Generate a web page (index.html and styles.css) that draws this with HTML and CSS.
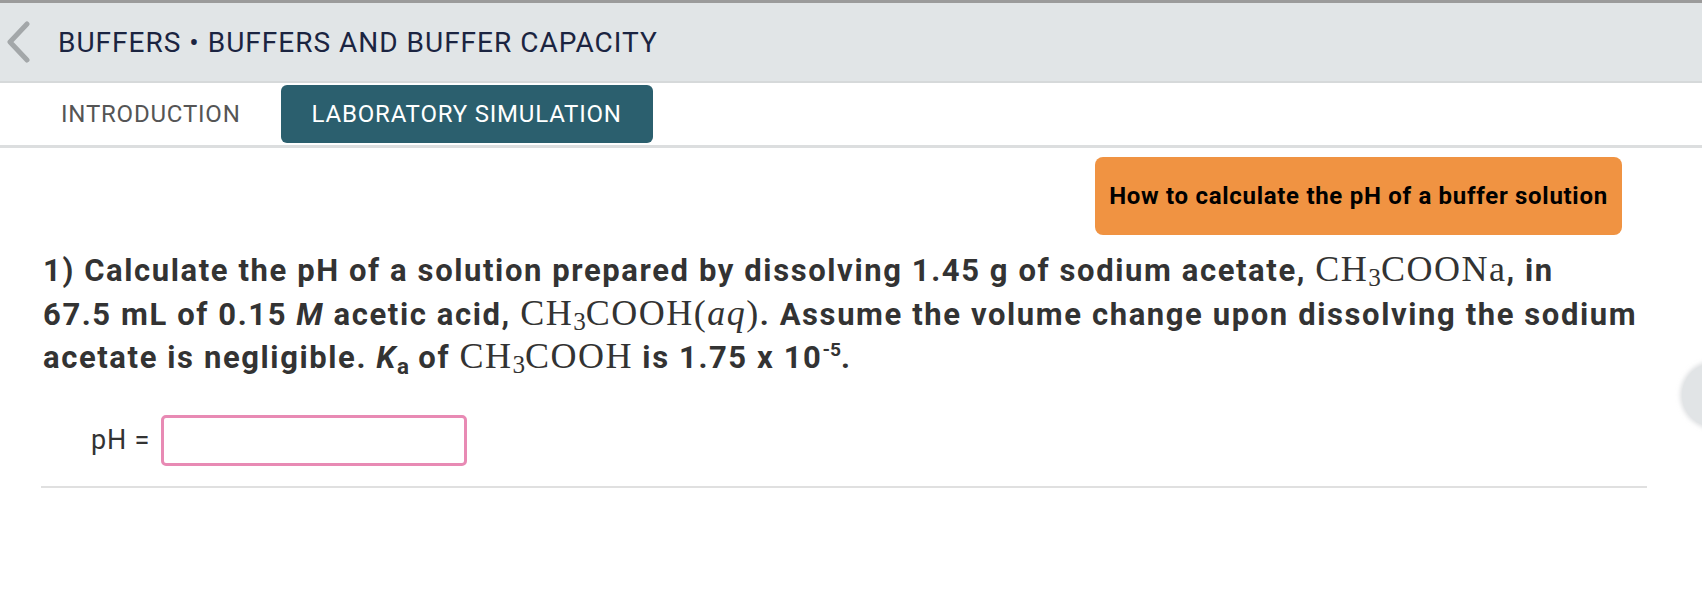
FILE: index.html
```html
<!DOCTYPE html>
<html lang="en">
<head>
<meta charset="utf-8">
<title>Buffers and Buffer Capacity</title>
<link rel="stylesheet" href="styles.css">
</head>
<body>
<div class="topline"></div>
<header class="header">
  <button class="back" aria-label="Back">
    <svg width="26" height="42" viewBox="0 0 26 42"><polyline points="22,3 5,21 22,39" fill="none" stroke="#a3a7a9" stroke-width="5" stroke-linecap="round" stroke-linejoin="round"/></svg>
  </button>
  <h1 class="title">BUFFERS • BUFFERS AND BUFFER CAPACITY</h1>
</header>
<nav class="tabs">
  <a class="tab">INTRODUCTION</a>
  <a class="tab active">LABORATORY SIMULATION</a>
</nav>
<main class="content">
  <div class="help-row">
    <button class="help">How to calculate the pH of a buffer solution</button>
  </div>
  <p class="question">1) Calculate the pH of a solution prepared by dissolving 1.45 g of sodium acetate, <span class="math">CH<sub>3</sub>COONa</span>, in 67.5&nbsp;mL of 0.15 <i>M</i> acetic acid, <span class="math">CH<sub>3</sub>COOH(<i>aq</i>)</span>. Assume the volume change upon dissolving the sodium acetate is negligible. <i>K</i><sub class="ka">a</sub> of <span class="math">CH<sub>3</sub>COOH</span> is 1.75 x 10<sup>-5</sup>.</p>
  <div class="answer">
    <label class="answer-label" for="ph">pH =</label>
    <input class="answer-input" id="ph" type="text">
  </div>
  <div class="sep"></div>
</main>
<div class="side-handle"></div>
</body>
</html>
```
FILE: styles.css
```css
html, body {
  margin: 0;
  padding: 0;
  background: #ffffff;
  font-family: Roboto, "Liberation Sans", sans-serif;
  overflow: hidden;
}
body {
  width: 1702px;
  height: 590px;
  position: relative;
}
.topline {
  height: 3px;
  background: #9b9b9b;
}
.header {
  height: 80px;
  box-sizing: border-box;
  background: #e1e5e7;
  border-bottom: 2px solid #d6d9da;
  display: flex;
  align-items: center;
  padding-left: 5px;
}
.back {
  border: 0;
  background: none;
  padding: 0;
  width: 26px;
  height: 42px;
  display: flex;
}
.title {
  margin: 0 0 0 27px;
  font-size: 28px;
  font-weight: 400;
  color: #1b2441;
  letter-spacing: 1px;
}
.tabs {
  height: 65px;
  box-sizing: border-box;
  border-bottom: 3px solid #dcdedf;
  display: flex;
  align-items: center;
  padding-left: 30px;
  gap: 9px;
}
.tab {
  height: 58px;
  padding: 0 31px;
  display: flex;
  align-items: center;
  font-size: 24px;
  letter-spacing: 0.8px;
  color: #555555;
  border-radius: 6px;
}
.tab.active {
  background: #2b5f6e;
  color: #ffffff;
}
.content {
  padding: 0 80px 0 41px;
}
.help-row {
  display: flex;
  justify-content: flex-end;
  padding-top: 9px;
}
.help {
  width: 527px;
  height: 78px;
  border: 0;
  border-radius: 8px;
  background: #f09342;
  color: #000000;
  font-family: Roboto, "Liberation Sans", sans-serif;
  font-weight: 700;
  font-size: 24px;
  letter-spacing: 0.7px;
}
.question {
  margin: 14px -25px 0 2px;
  font-size: 31px;
  line-height: 43.5px;
  font-weight: 700;
  letter-spacing: 1.6px;
  color: #333333;
}
.question i {
  font-style: italic;
}
.math {
  font-family: "Liberation Serif", serif;
  font-weight: 400;
  font-size: 36px;
  line-height: 1;
  letter-spacing: 1.5px;
  color: #333333;
}
.math sub {
  font-size: 0.7em;
  vertical-align: -0.2em;
  line-height: 0;
  letter-spacing: 0;
}
.math i {
  font-style: italic;
}
.ka {
  font-size: 0.72em;
  vertical-align: -0.25em;
  line-height: 0;
  letter-spacing: 0;
}
.question sup {
  font-size: 0.62em;
  vertical-align: 0.6em;
  line-height: 0;
  letter-spacing: 0;
}
.answer {
  display: flex;
  align-items: center;
  margin-top: 35px;
  padding-left: 50px;
  gap: 11px;
}
.answer-label {
  font-size: 27px;
  letter-spacing: 0.8px;
  color: #333333;
}
.answer-input {
  width: 306px;
  height: 51px;
  box-sizing: border-box;
  border: 3px solid #e88ab4;
  border-radius: 5px;
  outline: none;
  font-size: 24px;
  padding: 0 10px;
}
.sep {
  height: 2px;
  background: #e0e0e0;
  margin-top: 20px;
  margin-right: -25px;
}
.side-handle {
  position: absolute;
  left: 1682px;
  top: 363px;
  width: 64px;
  height: 64px;
  border-radius: 50%;
  background: #e1e4e6;
  box-shadow: 0 0 4px 2px rgba(200, 204, 206, 0.6);
}
```
